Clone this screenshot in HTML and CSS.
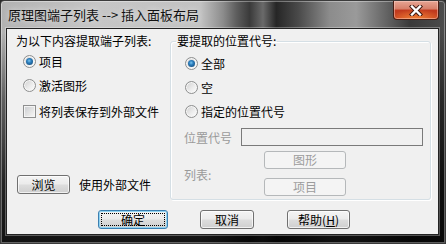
FILE: index.html
```html
<!DOCTYPE html>
<html lang="zh">
<head>
<meta charset="utf-8">
<link rel="stylesheet" href="styles.css">
</head>
<body>
<div class="window">
  <div class="titlebar">
    <span class="title">原理图端子列表 --&gt; 插入面板布局</span>
    <div class="close">
      <svg width="14" height="11" viewBox="0 0 14 11">
        <path d="M3 1.5 L11 9.5 M11 1.5 L3 9.5" stroke="#3a160e" stroke-width="4.2" stroke-linecap="square" fill="none"/>
        <path d="M3 1.5 L11 9.5 M11 1.5 L3 9.5" stroke="#ffffff" stroke-width="2.4" stroke-linecap="square" fill="none"/>
      </svg>
    </div>
  </div>
  <div class="client">
    <div class="main">
      <div class="left">
        <div class="label">为以下内容提取端子列表:</div>
        <div class="opt first"><span class="radio checked"></span><span>项目</span></div>
        <div class="opt"><span class="radio"></span><span>激活图形</span></div>
        <div class="opt check-row"><span class="checkbox"></span><span>将列表保存到外部文件</span></div>
        <div class="browse-row">
          <button class="btn browse">浏览</button>
          <span class="browse-text">使用外部文件</span>
        </div>
      </div>
      <fieldset class="group">
        <legend>要提取的位置代号:</legend>
        <div class="group-body">
          <div class="opt"><span class="radio checked"></span><span>全部</span></div>
          <div class="opt"><span class="radio"></span><span>空</span></div>
          <div class="opt"><span class="radio"></span><span>指定的位置代号</span></div>
          <div class="loc-grid">
            <span class="dis-label loc-label">位置代号</span>
            <div class="textbox"></div>
            <button class="btn disabled gbtn btn-graph">图形</button>
            <span class="dis-label list-label">列表:</span>
            <button class="btn disabled gbtn btn-item">项目</button>
          </div>
        </div>
      </fieldset>
    </div>
    <div class="footer">
      <button class="btn default ok">确定</button>
      <button class="btn cancel">取消</button>
      <button class="btn help">帮助(<u>H</u>)</button>
    </div>
  </div>
</div>
</body>
</html>
```
FILE: styles.css
```css
html, body {
  margin: 0;
  padding: 0;
  background: #2a2a2a;
}
body {
  width: 446px;
  height: 244px;
  overflow: hidden;
  font-family: "Noto Sans CJK SC", "Noto Sans", sans-serif;
  font-size: 12px;
  color: #000;
}
.window {
  box-sizing: border-box;
  width: 446px;
  height: 244px;
  border: 1px solid #3b3b3b;
  border-radius: 4px 4px 0 0;
  padding: 0 6px 8px 5px;
  display: flex;
  flex-direction: column;
  background:
    linear-gradient(to bottom, rgba(0,0,0,0) 0, rgba(0,0,0,0) 13%, rgba(0,0,0,.45) 40%, rgba(0,0,0,.8) 75%, rgba(0,0,0,.9) 100%),
    linear-gradient(to right, #b2b2b2 0, #c6c6c6 22%, #c2c2c2 45%, #8c8c8c 50%, #5e5e5e 53%, #3a3a3a 56%, #6a6a6a 59%, #262626 62%, #4a4a4a 67%, #8c8c8c 74%, #9a9a9a 80%, #6a6a6a 86%, #3a3a3a 92%, #4c4c4c 100%);
  box-shadow: inset 0 0 0 1px rgba(255,255,255,.35);
}
.titlebar {
  height: 27px;
  flex: none;
  display: flex;
  justify-content: space-between;
  align-items: flex-start;
}
.title {
  padding-left: 2px;
  line-height: 27px;
  font-size: 13px;
  color: #111;
  text-shadow: 0 0 6px rgba(255,255,255,.7);
  white-space: nowrap;
}
.close {
  box-sizing: border-box;
  width: 46px;
  height: 19px;
  border: 1px solid #4a1e14;
  border-top: none;
  border-radius: 0 0 4px 4px;
  display: flex;
  align-items: center;
  justify-content: center;
  background:
    radial-gradient(ellipse 60% 55% at 50% 100%, rgba(255,150,60,.75), rgba(255,150,60,0)),
    linear-gradient(to bottom, #e6a594 0%, #d67e68 45%, #c1391d 50%, #c84421 100%);
  box-shadow: inset 0 0 0 1px rgba(255,220,210,.45);
}
.close svg { display: block; margin-top: 1px; }

.client {
  flex: 1;
  box-sizing: border-box;
  background: #f0f0f0;
  border: 1px solid #222;
  box-shadow: 0 0 0 1px rgba(255,255,255,.3);
  padding: 5px 0 0 9px;
  display: flex;
  flex-direction: column;
}
.main {
  display: flex;
  align-items: flex-start;
}
.left {
  width: 154px;
  flex: none;
  display: flex;
  flex-direction: column;
}
.label {
  line-height: 14px;
  white-space: nowrap;
}
.opt {
  height: 24px;
  display: flex;
  align-items: center;
  white-space: nowrap;
}
.opt.first { margin-top: 1px; }
.opt.check-row { margin-top: 2px; }
.left .radio, .left .checkbox { margin-left: 7px; }

.radio {
  position: relative;
  box-sizing: border-box;
  width: 13px;
  height: 13px;
  flex: none;
  border-radius: 50%;
  border: 1px solid #8e8f8f;
  background: linear-gradient(135deg, #cfcfcf 0%, #ececec 55%, #ffffff 100%);
  box-shadow: inset 0 0 0 1px #f6f6f6;
  margin-right: 3px;
}
.radio.checked::after {
  content: "";
  position: absolute;
  left: 2px;
  top: 2px;
  width: 7px;
  height: 7px;
  border-radius: 50%;
  background: radial-gradient(circle at 45% 40%, #7cc6ee 0%, #2c7fbf 35%, #113f68 100%);
}
.checkbox {
  box-sizing: border-box;
  width: 13px;
  height: 13px;
  flex: none;
  border: 1px solid #8e8f8f;
  background: linear-gradient(135deg, #c9ccd0 0%, #e6e6e6 60%, #f8f8f8 100%);
  box-shadow: inset 0 0 0 1px #f4f4f4;
  margin-right: 3px;
}
.browse-row {
  margin-top: 52px;
  display: flex;
  align-items: center;
  white-space: nowrap;
}
.browse { margin-left: 1px; width: 53px; }
.browse-text { margin-left: 9px; }

.btn {
  box-sizing: border-box;
  height: 19px;
  padding: 0;
  font-family: inherit;
  font-size: 12px;
  line-height: 16px;
  color: #000;
  border: 1px solid #707070;
  border-radius: 3px;
  background: linear-gradient(to bottom, #f4f4f4 0%, #ebebeb 48%, #dddddd 52%, #cfcfcf 100%);
  box-shadow: inset 0 0 0 1px rgba(255,255,255,.7);
  text-align: center;
  white-space: nowrap;
}
.btn.default {
  border-color: #3c7fb1;
  box-shadow: inset 0 0 0 1px #8fd3f2;
  outline: 1px dotted #000;
  outline-offset: -4px;
}
.btn.disabled {
  border-color: #b5b8ba;
  background: #f4f4f4;
  box-shadow: none;
  color: #9c9c9c;
}
.btn u { text-decoration: underline; }

.group {
  box-sizing: border-box;
  width: 261px;
  margin: 0;
  padding: 3px 0 3px 0;
  border: 1px solid #d5dfe5;
  border-radius: 3px;
  box-shadow: inset 1px 1px 0 #fff, 1px 1px 0 #fff;
  min-width: 0;
}
.group legend {
  margin-left: 5px;
  padding: 0 1px;
  line-height: 14px;
  white-space: nowrap;
}
.group-body {
  padding-left: 13px;
}
.group-body .radio { margin-left: 1px; }

.loc-grid {
  margin-top: 5px;
  display: grid;
  grid-template-columns: 57px 182px;
}
.dis-label {
  color: #9a9a9a;
  white-space: nowrap;
}
.loc-label {
  grid-column: 1;
  grid-row: 1;
  align-self: center;
}
.textbox {
  grid-column: 2;
  grid-row: 1;
  box-sizing: border-box;
  height: 18px;
  border: 1px solid #7a7a7a;
  background: #f0f0f0;
}
.gbtn {
  grid-column: 2;
  width: 82px;
  height: 18px;
  margin-left: 23px;
  line-height: 16px;
}
.btn-graph { grid-row: 2; margin-top: 5px; }
.btn-item { grid-row: 3; margin-top: 9px; }
.list-label {
  grid-column: 1;
  grid-row: 2 / 4;
  align-self: center;
  margin-top: 7px;
}

.footer {
  margin-top: 10px;
  padding-left: 82px;
  display: flex;
}
.ok { width: 70px; }
.cancel { width: 54px; margin-left: 32px; }
.help { width: 63px; margin-left: 33px; }
```
